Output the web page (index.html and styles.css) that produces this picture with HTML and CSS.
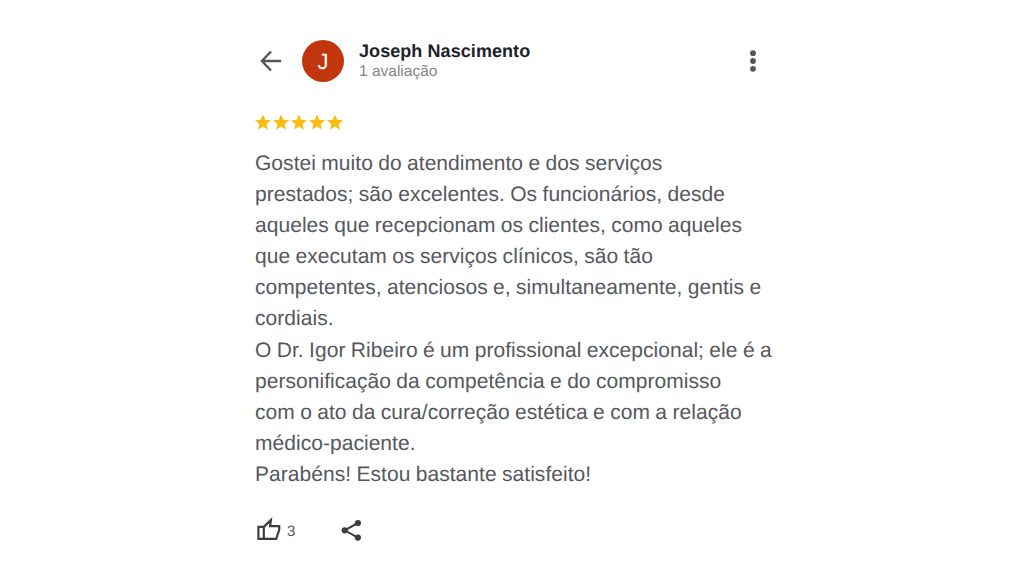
FILE: index.html
```
<!DOCTYPE html>
<html lang="pt-BR">
<head>
  <meta charset="UTF-8" />
  <meta name="viewport" content="width=device-width, initial-scale=1.0"/>
  <title>Avaliação</title>
  <link rel="stylesheet" href="styles.css">
</head>
<body>

  <article class="review">
    <!-- Author -->
    <header class="review-header">
      <svg class="back" viewBox="0 0 22 22"><path d="M21.2 11H2M11 1.5L1.9 11L11 20.5"/></svg>
      <div class="avatar">J</div>
      <div class="author">
        <h2>Joseph Nascimento</h2>
        <p>1 avaliação</p>
      </div>
      <svg class="more" viewBox="0 0 8 24"><circle cx="4" cy="4.2" r="2.9"/><circle cx="4" cy="12" r="2.9"/><circle cx="4" cy="19.8" r="2.9"/></svg>
    </header>

    <!-- Rating -->
    <div class="stars">
      <svg viewBox="2 2 20 19"><path d="M12 17.27L18.18 21l-1.64-7.03L22 9.24l-7.19-.61L12 2 9.19 8.63 2 9.24l5.46 4.73L5.82 21z"/></svg>
      <svg viewBox="2 2 20 19"><path d="M12 17.27L18.18 21l-1.64-7.03L22 9.24l-7.19-.61L12 2 9.19 8.63 2 9.24l5.46 4.73L5.82 21z"/></svg>
      <svg viewBox="2 2 20 19"><path d="M12 17.27L18.18 21l-1.64-7.03L22 9.24l-7.19-.61L12 2 9.19 8.63 2 9.24l5.46 4.73L5.82 21z"/></svg>
      <svg viewBox="2 2 20 19"><path d="M12 17.27L18.18 21l-1.64-7.03L22 9.24l-7.19-.61L12 2 9.19 8.63 2 9.24l5.46 4.73L5.82 21z"/></svg>
      <svg viewBox="2 2 20 19"><path d="M12 17.27L18.18 21l-1.64-7.03L22 9.24l-7.19-.61L12 2 9.19 8.63 2 9.24l5.46 4.73L5.82 21z"/></svg>
    </div>

    <p class="review-text">Gostei muito do atendimento e dos serviços<br>
      prestados; são excelentes. Os funcionários, desde<br>
      aqueles que recepcionam os clientes, como aqueles<br>
      que executam os serviços clínicos, são tão<br>
      competentes, atenciosos e, simultaneamente, gentis e<br>
      cordiais.<br>
      O Dr. Igor Ribeiro é um profissional excepcional; ele é a<br>
      personificação da competência e do compromisso<br>
      com o ato da cura/correção estética e com a relação<br>
      médico-paciente.<br>
      Parabéns! Estou bastante satisfeito!</p>

    <!-- Actions -->
    <footer class="actions">
      <svg class="like" viewBox="0 0 24 23"><path d="M1.4 8.9H6.8V20.9H1.4zM6.8 8.9L13.9 2L13.1 8.2H22.2V11.8L19.2 20.9H6.8"/></svg>
      <span class="count">3</span>
      <svg class="share" viewBox="0 0 20 22"><path d="M16.9 4L3.7 11.3L16.9 18.6"/><circle cx="16.9" cy="4" r="3.1"/><circle cx="3.7" cy="11.3" r="3.1"/><circle cx="16.9" cy="18.6" r="3.1"/></svg>
    </footer>
  </article>

</body>
</html>
```
FILE: styles.css
```
* { box-sizing: border-box; margin: 0; padding: 0; }
body { background: #fff; font-family: "Liberation Sans", Arial, sans-serif; text-rendering: geometricPrecision; }
svg { display: block; flex: none; overflow: visible; }

.review { width: 520px; margin-left: 255px; padding-top: 40px; }

/* Header */
.review-header { display: flex; align-items: center; height: 42px; padding-left: 5px; }
.back { width: 22px; height: 22px; fill: none; stroke: #53565c; stroke-width: 2.4; }
.avatar { width: 42px; height: 42px; margin-left: 20px; border-radius: 50%; background: #c1360c; color: #fff; font-size: 22px; line-height: 43px; text-align: center; }
.author { margin-left: 15px; }
.author h2 { color: #202229; font-size: 18px; line-height: 20px; letter-spacing: 0.07px; white-space: nowrap; }
.author p { padding-top: 1px; color: #85868a; font-size: 15.5px; line-height: 20px; }
.more { width: 8px; height: 24px; margin-left: auto; margin-right: 18px; fill: #53565c; }

.stars { display: flex; gap: 2.1px; margin-top: 32px; }
.stars svg { width: 16px; height: 16px; fill: #fbbc0d; }

.review-text { margin-top: 18px; color: #56585e; font-size: 21px; line-height: 31.1px; letter-spacing: 0.04px; word-spacing: -0.5px; white-space: nowrap; }

/* Footer */
.actions { display: flex; align-items: center; height: 24px; margin-top: 27.5px; padding-left: 2px; }
.like { width: 24px; height: 23px; fill: none; stroke: #3b3d44; stroke-width: 2.2; }
.count { margin-left: 6px; padding-top: 3px; color: #56585e; font-size: 15px; }
.share { width: 20px; height: 22px; margin-left: 46px; fill: #3b3d44; }
.share path { fill: none; stroke: #3b3d44; stroke-width: 2; }
```
